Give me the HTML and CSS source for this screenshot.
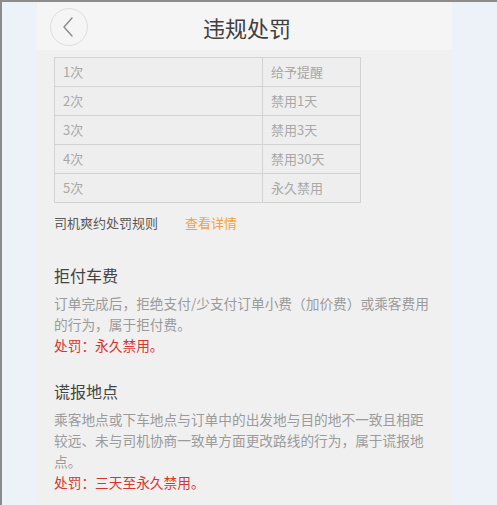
FILE: index.html
```html
<!DOCTYPE html>
<html lang="zh-CN">
<head>
<meta charset="utf-8">
<title>违规处罚</title>
<link rel="stylesheet" href="styles.css">
</head>
<body>
<div class="frame">
  <div class="panel">
    <header class="topbar">
      <div class="back">
        <svg width="14" height="22" viewBox="0 0 14 22"><path d="M11 2 L3 11 L11 20" fill="none" stroke="#8a8a8a" stroke-width="1.4" stroke-linecap="round" stroke-linejoin="round"/></svg>
      </div>
      <h1 class="title">违规处罚</h1>
    </header>
    <table class="rules">
      <tr><td class="c1">1次</td><td>给予提醒</td></tr>
      <tr><td class="c1">2次</td><td>禁用1天</td></tr>
      <tr><td class="c1">3次</td><td>禁用3天</td></tr>
      <tr><td class="c1">4次</td><td>禁用30天</td></tr>
      <tr><td class="c1">5次</td><td>永久禁用</td></tr>
    </table>
    <div class="ruleline"><span>司机爽约处罚规则</span><span class="more">查看详情</span></div>
    <section class="item first">
      <h2>拒付车费</h2>
      <p class="desc">订单完成后，拒绝支付/少支付订单小费（加价费）或乘客费用<br>的行为，属于拒付费。</p>
      <p class="penalty">处罚：永久禁用。</p>
    </section>
    <section class="item">
      <h2>谎报地点</h2>
      <p class="desc">乘客地点或下车地点与订单中的出发地与目的地不一致且相距<br>较远、未与司机协商一致单方面更改路线的行为，属于谎报地<br>点。</p>
      <p class="penalty">处罚：三天至永久禁用。</p>
    </section>
  </div>
</div>
</body>
</html>
```

FILE: styles.css
```css
html, body {
  margin: 0;
  padding: 0;
  height: 100%;
}
body {
  font-family: "Noto Sans CJK SC", "Noto Sans", sans-serif;
  background: #edf2f9;
  overflow: hidden;
}
.frame {
  height: 100%;
  box-sizing: border-box;
  border-top: 2px solid #8c8c8c;
  border-left: 2px solid #8c8c8c;
  padding-left: 35px;
}
.panel {
  width: 415px;
  height: 100%;
  background: #f0f0f0;
}
.topbar {
  height: 48px;
  background: #f5f5f5;
  display: flex;
  align-items: center;
  position: relative;
}
.back {
  margin-left: 13px;
  margin-top: 2px;
  width: 38px;
  height: 38px;
  border: 1px solid #dedede;
  border-radius: 50%;
  display: flex;
  align-items: center;
  justify-content: center;
  box-sizing: border-box;
}
.back svg { margin-right: 3px; }
.title {
  margin: 0;
  position: absolute;
  left: 0;
  right: 0;
  top: 3px;
  text-align: center;
  font-size: 22px;
  font-weight: normal;
  color: #404040;
  line-height: 44px;
  pointer-events: none;
  padding-left: 5px;
}
.rules {
  margin: 7px 0 0 17px;
  border-collapse: collapse;
  width: 307px;
}
.rules td {
  border: 1px solid #d2d2d2;
  height: 28px;
  padding: 0 0 0 8px;
  font-size: 13px;
  color: #a8a8a8;
  background: #eeeeee;
  line-height: 28px;
}
.rules td.c1 { width: 199px; }
.ruleline {
  margin: 10px 0 0 17px;
  font-size: 13px;
  line-height: 20px;
  color: #5a5a5a;
  display: flex;
  gap: 27px;
}
.ruleline .more { color: #f3a33a; }
.item { padding-left: 17px; }
.item h2 {
  margin: 0;
  font-size: 16px;
  font-weight: normal;
  color: #444;
  line-height: 22px;
}
.item.first { margin-top: 31px; }
.item + .item { margin-top: 24px; }
.desc {
  margin: 7px 0 0 0;
  font-size: 13.7px;
  line-height: 21px;
  color: #9b9b9b;
  white-space: nowrap;
}
.penalty {
  margin: 0;
  font-size: 13.7px;
  line-height: 21px;
  color: #d6352f;
}
```
